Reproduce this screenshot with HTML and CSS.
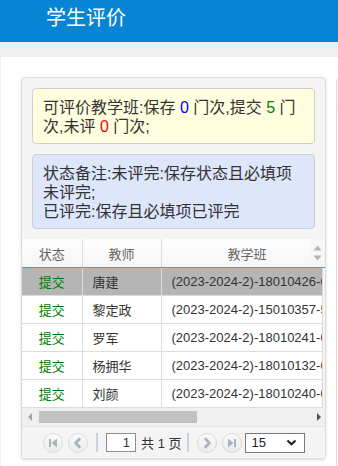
FILE: index.html
```html
<!DOCTYPE html>
<html lang="zh-CN">
<head>
  <meta charset="UTF-8">
  <meta name="viewport" content="width=device-width, initial-scale=1.0">
  <title>学生评价</title>
  <link rel="stylesheet" href="styles.css">
</head>
<body>
  <header class="topbar">
    <h1>学生评价</h1>
  </header>
  <main class="panel">
    <section class="card">
      <div class="note note-stat">可评价教学班:保存 <span class="n-save">0</span> 门次,提交 <span class="n-submit">5</span> 门次,未评 <span class="n-none">0</span> 门次;</div>
      <div class="note note-tip">状态备注:未评完:保存状态且必填项未评完;<br>已评完:保存且必填项已评完</div>
      <div class="grid">
        <div class="grid-head">
          <table class="grid-table">
            <colgroup><col class="c-state"><col class="c-teacher"><col class="c-class"></colgroup>
            <tr>
              <th>状态</th>
              <th>教师</th>
              <th>教学班</th>
            </tr>
          </table>
          <div class="vscroll">
            <svg width="9" height="6" viewBox="0 0 9 6"><path d="M0.5 5.5 L4.5 0.5 L8.5 5.5 Z" fill="#b4b4b4"/></svg>
            <svg width="9" height="6" viewBox="0 0 9 6"><path d="M0.5 0.5 L4.5 5.5 L8.5 0.5 Z" fill="#b4b4b4"/></svg>
          </div>
        </div>
        <div class="grid-body">
          <table class="grid-table">
            <colgroup><col class="c-state"><col class="c-teacher"><col class="c-class"></colgroup>
            <tr class="selected">
              <td class="state">提交</td>
              <td>唐建</td>
              <td>(2023-2024-2)-18010426-0</td>
            </tr>
            <tr>
              <td class="state">提交</td>
              <td>黎定政</td>
              <td>(2023-2024-2)-15010357-5</td>
            </tr>
            <tr>
              <td class="state">提交</td>
              <td>罗军</td>
              <td>(2023-2024-2)-18010241-0</td>
            </tr>
            <tr>
              <td class="state">提交</td>
              <td>杨拥华</td>
              <td>(2023-2024-2)-18010132-0</td>
            </tr>
            <tr>
              <td class="state">提交</td>
              <td>刘颜</td>
              <td>(2023-2024-2)-18010240-0</td>
            </tr>
          </table>
        </div>
        <div class="hscroll">
          <svg class="arrow" width="4" height="8" viewBox="0 0 4 8"><path d="M4 0 L0 4 L4 8 Z" fill="#a3a3a3"/></svg>
          <div class="track"><div class="thumb"></div></div>
          <svg class="arrow" width="4" height="8" viewBox="0 0 4 8"><path d="M0 0 L4 4 L0 8 Z" fill="#505050"/></svg>
        </div>
        <div class="pager">
          <span class="pg-btn">
            <svg width="20" height="20" viewBox="0 0 20 20"><rect x="6" y="6" width="2" height="8" fill="#a9b1ba"/><path d="M14 5.5 L8.5 10 L14 14.5 Z" fill="#a9b1ba"/></svg>
          </span>
          <span class="pg-btn">
            <svg width="20" height="20" viewBox="0 0 20 20"><path d="M11.5 6 L7.5 10 L11.5 14" fill="none" stroke="#a9b1ba" stroke-width="2.6" stroke-linejoin="round" stroke-linecap="round"/></svg>
          </span>
          <span class="pg-sep"></span>
          <input class="pg-input" type="text" value="1">
          <span class="pg-text">共 1 页</span>
          <span class="pg-sep"></span>
          <span class="pg-btn">
            <svg width="20" height="20" viewBox="0 0 20 20"><path d="M8.5 6 L12.5 10 L8.5 14" fill="none" stroke="#a9b1ba" stroke-width="2.6" stroke-linejoin="round" stroke-linecap="round"/></svg>
          </span>
          <span class="pg-btn">
            <svg width="20" height="20" viewBox="0 0 20 20"><path d="M6 5.5 L11.5 10 L6 14.5 Z" fill="#a9b1ba"/><rect x="12" y="6" width="2" height="8" fill="#a9b1ba"/></svg>
          </span>
          <span class="pg-select">
            <span>15</span>
            <svg width="11" height="7" viewBox="0 0 11 7"><path d="M1.5 1.5 L5.5 5.2 L9.5 1.5" fill="none" stroke="#222" stroke-width="2.2"/></svg>
          </span>
        </div>
      </div>
    </section>
    <section class="card card-next">
      <div class="next-head"></div>
    </section>
  </main>
</body>
</html>
```

FILE: styles.css
```css
html, body {
  margin: 0;
  height: 100%;
  overflow: hidden;
}
body {
  background-color: #efefef;
  font-family: "Liberation Sans", "Noto Sans CJK SC", sans-serif;
  color: #333;
}
.topbar {
  height: 42px;
  background-color: #0784d4;
  box-sizing: border-box;
  padding: 6px 0 0 46px;
}
.topbar h1 {
  margin: 0;
  font-family: "Noto Sans CJK SC", sans-serif;
  font-weight: normal;
  font-size: 20px;
  line-height: 22px;
  color: #fff;
}
.panel {
  margin: 15px 0 0 1px;
  background-color: #fff;
  height: 409px;
  box-sizing: border-box;
  padding: 20px 0 0 20px;
  display: flex;
  gap: 10px;
  overflow: hidden;
}
.card {
  flex: 0 0 304px;
  box-sizing: border-box;
  align-self: flex-start;
  background-color: #f4f4f4;
  border: 1px solid #dcdcdc;
  border-radius: 4px;
  padding: 10px 10px 0;
  box-shadow: 0 1px 3px rgba(0, 0, 0, 0.15);
}
.card-next {
  flex: 0 0 200px;
  height: 400px;
  padding: 0;
  background-color: #fff;
  box-shadow: none;
}
.next-head {
  height: 32px;
  background-color: #f4f4f4;
  border-bottom: 1px solid #e4e4e4;
}
.note {
  border: 1px solid #cfcfcf;
  border-radius: 4px;
  padding: 9px 10px 7px;
  font-size: 16px;
  line-height: 19px;
}
.note-stat {
  background-color: #ffffdf;
}
.note-tip {
  margin-top: 10px;
  background-color: #dee6fb;
}
.n-save {
  color: #0000ff;
}
.n-submit {
  color: #008000;
}
.n-none {
  color: #ff0000;
}
.grid {
  margin: 10px -10px 0;
  background-color: #f4f4f4;
}
.grid-table {
  border-collapse: collapse;
  table-layout: fixed;
  width: 360px;
}
.c-state {
  width: 60px;
}
.c-teacher {
  width: 79px;
}
.c-class {
  width: 221px;
}
.grid-head {
  display: flex;
  height: 28px;
  background: linear-gradient(#fdfdfd, #f6f6f6);
  border-bottom: 1px solid #4a9be0;
  overflow: hidden;
}
.grid-head .grid-table {
  flex: 0 0 auto;
  margin-right: -72px;
}
.grid-head th {
  height: 28px;
  padding: 0;
  font-size: 13px;
  font-weight: normal;
  color: #666;
  border-right: 1px solid #dcdcdc;
  text-align: center;
}
.grid-head th:last-child {
  text-align: left;
  padding-left: 66px;
}
.vscroll {
  flex: 0 0 14px;
  background: #f6f6f6;
  display: flex;
  flex-direction: column;
  align-items: center;
  justify-content: center;
  gap: 4px;
}
.grid-body {
  width: 300px;
  overflow: hidden;
  background-color: #fff;
  border-right: 1px solid #dcdcdc;
}
.grid-body td {
  height: 27px;
  padding: 0 0 0 10px;
  font-size: 13px;
  white-space: nowrap;
  overflow: hidden;
  border-right: 1px solid #dcdcdc;
  border-bottom: 1px solid #dcdcdc;
}
.grid-body td.state {
  padding: 0;
  text-align: center;
  color: #008000;
}
.grid-body tr.selected td {
  background-color: #b5b5b5;
}
.hscroll {
  display: flex;
  align-items: center;
  height: 18px;
  background-color: #f0f0f0;
  padding: 0 4px 0 6px;
}
.track {
  flex: 1;
  padding: 0 0 0 7px;
}
.thumb {
  width: 158px;
  height: 12px;
  background-color: #c1c1c1;
}
.pager {
  display: flex;
  align-items: center;
  justify-content: center;
  height: 31px;
  border-top: 1px solid #e2e2e2;
  padding-left: 2px;
  font-size: 13px;
}
.pg-btn {
  width: 20px;
  height: 20px;
  box-sizing: border-box;
  border: 1px solid #dadada;
  border-radius: 50%;
  background: linear-gradient(#fafafa, #ececec);
  display: flex;
  align-items: center;
  justify-content: center;
  margin-right: 5px;
}
.pg-btn svg {
  flex: 0 0 auto;
}
.pg-sep {
  width: 2px;
  height: 19px;
  background-color: #c7d3df;
  margin: 0 8px 0 3px;
}
.pg-input {
  width: 30px;
  height: 19px;
  box-sizing: border-box;
  border: 1px solid #8d8d8d;
  padding: 0 5px 0 0;
  text-align: right;
  font-family: "Liberation Sans", sans-serif;
  font-size: 13px;
  color: #333;
  margin: 0 5px 0 0;
}
.pg-text {
  margin-right: 3px;
}
.pg-select {
  width: 60px;
  height: 20px;
  box-sizing: border-box;
  border: 1px solid #7a7a7a;
  background-color: #fff;
  display: flex;
  align-items: center;
  justify-content: space-between;
  padding: 0 7px 0 5px;
  margin-left: -2px;
  font-size: 13px;
  color: #222;
}
```
